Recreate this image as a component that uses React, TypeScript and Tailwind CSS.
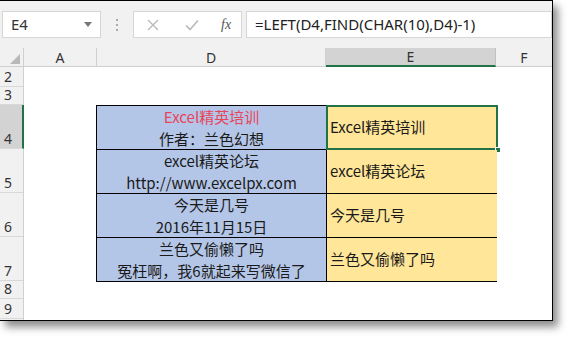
import React from 'react'

const ui = { fontFamily: '"Noto Sans", "Noto Sans CJK SC", sans-serif' }
const cjk = { fontFamily: '"Noto Sans CJK SC", "Noto Sans", sans-serif' }

const rowsD = [
  [<span className="text-[#e8445a]">Excel精英培训</span>, '作者：兰色幻想'],
  ['excel精英论坛', 'http://www.excelpx.com'],
  ['今天是几号', '2016年11月15日'],
  ['兰色又偷懒了吗', '冤枉啊，我6就起来写微信了'],
]
const rowsE = ['Excel精英培训', 'excel精英论坛', '今天是几号', '兰色又偷懒了吗']

// ——— barra de fórmulas ———
function FormulaBar() {
  return (
    <div className="h-[47px] bg-[#f1f1f1] pt-[10px] flex items-start" style={ui}>
      <div className="ml-[2px] w-[99px] h-[27px] bg-white border border-[#d6d6d6] flex items-center justify-between px-2">
        <span className="text-[15px] text-[#333]">E4</span>
        <svg width="8" height="5" viewBox="0 0 8 5"><path d="M0 0h8L4 5z" fill="#777" /></svg>
      </div>
      <div className="w-[32px] h-[27px] flex flex-col items-center justify-center gap-[3px]">
        <span className="w-[2px] h-[2px] bg-[#aaa]" />
        <span className="w-[2px] h-[2px] bg-[#aaa]" />
        <span className="w-[2px] h-[2px] bg-[#aaa]" />
      </div>
      <div className="w-[109px] h-[27px] bg-white border border-[#d6d6d6] flex items-center">
        <svg className="ml-[13px]" width="12" height="12" viewBox="0 0 12 12"><path d="M1 1l10 10M11 1L1 11" stroke="#b9b9b9" strokeWidth="1.4" /></svg>
        <svg className="ml-[26px]" width="14" height="12" viewBox="0 0 14 12"><path d="M1 6.5l4 4L13 1.5" stroke="#b9b9b9" strokeWidth="1.6" fill="none" /></svg>
        <span className="ml-[22px] text-[14px] italic text-[#555]" style={{ fontFamily: '"Liberation Serif", serif' }}>fx</span>
      </div>
      <div className="ml-[4px] flex-1 h-[27px] bg-white border border-[#d6d6d6] flex items-center pl-[8px]">
        <span className="text-[15px] text-[#222]">=LEFT(D4,FIND(CHAR(10),D4)-1)</span>
      </div>
    </div>
  )
}

// ——— hoja ———
function Sheet() {
  const rowH = ['h-[20px]', 'h-[18px]', 'h-[44px]', 'h-[44px]', 'h-[44px]', 'h-[44px]', 'h-[18px]', 'h-[20px]']
  const rowN = ['2', '3', '4', '5', '6', '7', '8', '9']
  return (
    <div className="flex-1 flex flex-col bg-white" style={ui}>
      {/* encabezados de columna */}
      <div className="h-[19px] flex bg-[#f1f1f1] border-b border-[#d0d0d0] text-[14px] text-[#333]">
        <div className="w-[24px] border-r border-[#d0d0d0] flex items-end justify-end pr-[3px] pb-[2px]">
          <svg width="10" height="10" viewBox="0 0 10 10"><path d="M10 0v10H0z" fill="#b8b8b8" /></svg>
        </div>
        <div className="w-[73px] border-r border-[#d0d0d0] flex items-center justify-center">A</div>
        <div className="w-[229px] border-r border-[#d0d0d0] flex items-center justify-center">D</div>
        <div className="w-[170px] bg-[#d3d3d3] border-r border-[#c0c0c0] border-b-2 border-b-[#217346] flex items-center justify-center -mb-px">E</div>
        <div className="flex-1 flex items-center justify-center">F</div>
      </div>
      <div className="flex flex-1">
        {/* números de fila */}
        <div className="w-[24px] bg-[#f1f1f1] border-r border-[#d0d0d0] flex flex-col text-[14px] text-[#333]">
          {rowN.map((n, i) => (
            <div
              key={n}
              className={`${rowH[i]} border-b border-[#d8d8d8] flex items-end pl-[4px] leading-[18px] ${n === '4' ? 'bg-[#d3d3d3] border-r-2 border-r-[#217346] -mr-px' : ''}`}
            >
              {n}
            </div>
          ))}
        </div>
        <div className="flex-1 flex flex-col">
          <div className="h-[38px]" />
          <div className="ml-[72px] w-[401px] grid grid-cols-[229px_170px] auto-rows-[43px] gap-px bg-black border border-black" style={cjk}>
            {rowsD.map((d, i) => (
              <React.Fragment key={i}>
                <div className="bg-[#b4c6e7] flex flex-col items-center justify-center text-[15px] leading-[22px] text-[#1a1a1a]">
                  <div>{d[0]}</div>
                  <div>{d[1]}</div>
                </div>
                <div className="bg-[#ffe699] flex items-center pl-[3px] text-[15px] text-[#1a1a1a] relative">
                  {rowsE[i]}
                  {i === 0 && (
                    <>
                      <div className="absolute -inset-px border-2 border-[#217346]" />
                      <div className="absolute -right-[4px] -bottom-[4px] w-[6px] h-[6px] bg-[#217346] border border-white" />
                    </>
                  )}
                </div>
              </React.Fragment>
            ))}
          </div>
        </div>
      </div>
    </div>
  )
}

export default function App() {
  return (
    <div className="w-[574px] h-[342px] bg-white">
      <div className="w-[553px] h-[321px] border-t border-r border-b border-black flex flex-col overflow-hidden shadow-[5px_6px_8px_rgba(0,0,0,0.45)]">
        <FormulaBar />
        <Sheet />
      </div>
    </div>
  )
}
